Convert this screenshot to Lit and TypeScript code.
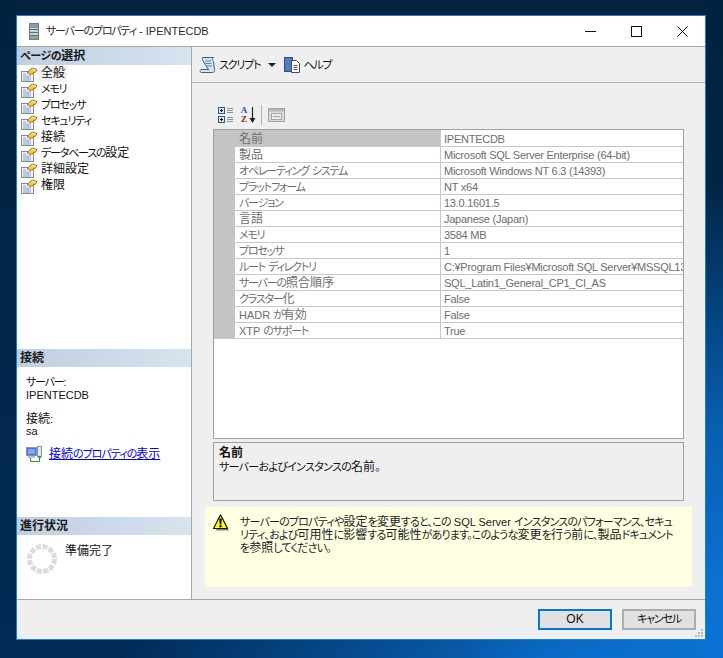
import { LitElement, html, css, svg } from "lit";
import { customElement } from "lit/decorators.js";

const PAGES = ["全般", "メモリ", "プロセッサ", "セキュリティ", "接続", "データベースの設定", "詳細設定", "権限"];

const ROWS = [
  ["名前", "IPENTECDB"],
  ["製品", "Microsoft SQL Server Enterprise (64-bit)"],
  ["オペレーティング システム", "Microsoft Windows NT 6.3 (14393)"],
  ["プラットフォーム", "NT x64"],
  ["バージョン", "13.0.1601.5"],
  ["言語", "Japanese (Japan)"],
  ["メモリ", "3584 MB"],
  ["プロセッサ", "1"],
  ["ルート ディレクトリ", "C:¥Program Files¥Microsoft SQL Server¥MSSQL13.MSSQLSERVER¥MSSQL"],
  ["サーバーの照合順序", "SQL_Latin1_General_CP1_CI_AS"],
  ["クラスター化", "False"],
  ["HADR が有効", "False"],
  ["XTP のサポート", "True"],
];

// the dialog font has narrow kana and small latin next to full width kanji
const jp = (s: string) =>
  s.split(/([ぁ-ヿ、。]+|[\x20-\x7e¥]+)/).map((part) => {
    if (!part) return "";
    if (/^[ぁ-ヿ、。]/.test(part)) return html`<span class="k">${part}</span>`;
    if (/^[\x20-\x7e¥]/.test(part)) return html`<span class="l">${part}</span>`;
    return part;
  });

const pageIcon = svg`<svg class="icon" width="17" height="15" viewBox="0 0 17 15">
  <rect x="0.500" y="4.500" width="12" height="10" fill="#f6f6f6" stroke="#8b8b8b"/>
  <path d="M2 7h3M2 9h8M2 11h8M2 13h8" stroke="#7d9cc4"/>
  <path d="M6 5.500L11 1l5 1.500-1.500 2.500-5 2.500z" fill="#f3c93e" stroke="#6e5a1c" stroke-width="0.800"/>
  <path d="M11 2l4 1.500" stroke="#fff2a8"/>
</svg>`;

const titleIcon = svg`<svg class="icon" width="10" height="17" viewBox="0 0 10 17">
  <rect x="0.500" y="0.500" width="9" height="16" fill="#c9d3da" stroke="#6f7c88"/>
  <rect x="1" y="1" width="8" height="4" fill="#8c9aa6"/>
  <path d="M1 6.500h8M1 9.500h8M1 12.500h8" stroke="#5d6c78"/>
  <rect x="1" y="13" width="8" height="3" fill="#86b26f"/>
</svg>`;

const scrollIcon = svg`<svg class="icon" width="18" height="18" viewBox="0 0 18 18">
  <path d="M3.500 1.500h11c-1.500 1-1.500 3 0 4l1 8c.5 2-.5 3-2 3H2.500c-1.500 0-2-2-.5-3h8l-1-.5L3.500 4c-.5-1 0-2.500 0-2.500z" fill="#d5e3f1" stroke="#3d6187"/>
  <path d="M6 5h6M6.500 7.500h6M7 10h6" stroke="#5a83ad"/>
</svg>`;

const helpIcon = svg`<svg class="icon" width="17" height="17" viewBox="0 0 17 17">
  <rect x="0.500" y="1.500" width="8" height="14" fill="#4f7fc0" stroke="#2c4f86"/>
  <path d="M7.500 4.500h5l3 3v9h-8z" fill="#fbfbfb" stroke="#4a4a4a"/>
  <path d="M9.500 9.500h4M9.500 11.500h4M9.500 13.500h4" stroke="#555"/>
</svg>`;

const categoryIcon = svg`<svg class="icon" width="16" height="16" viewBox="0 0 16 16">
  <rect x="0.500" y="0.500" width="6" height="6" fill="#dbe9f7" stroke="#33587f"/>
  <rect x="0.500" y="9.500" width="6" height="6" fill="#dbe9f7" stroke="#33587f"/>
  <path d="M2 3.500h3M3.500 2v3M2 12.500h3M3.500 11v3" stroke="#111"/>
  <path d="M9 1.500h6M9 3.500h6M9 5.500h6M9 10.500h6M9 12.500h6M9 14.500h6" stroke="#8b9299"/>
</svg>`;

const arrowIcon = svg`<svg class="icon" width="7" height="17" viewBox="0 0 7 17">
  <path d="M3.500 0v13" stroke="#222" stroke-width="1.200"/>
  <path d="M0.500 11h6l-3 5z" fill="#222"/>
</svg>`;

const pagesIcon = svg`<svg class="icon" width="17" height="14" viewBox="0 0 17 14">
  <rect x="0.500" y="0.500" width="16" height="13" fill="#dcdcdc" stroke="#a2a2a2"/>
  <rect x="1" y="1" width="15" height="2.500" fill="#b9b9b9"/>
  <rect x="3.500" y="5.500" width="10" height="6" fill="#ececec" stroke="#a8a8a8"/>
  <path d="M5 8.500h7" stroke="#a8a8a8"/>
</svg>`;

const connectIcon = svg`<svg class="icon" width="17" height="16" viewBox="0 0 17 16">
  <rect x="0.500" y="1.500" width="10" height="8" fill="#3f74d8" stroke="#8a94a3"/>
  <rect x="2" y="3" width="7" height="5" fill="#7fa8ee"/>
  <rect x="2" y="10" width="7" height="2" fill="#b8bec7"/>
  <rect x="11.500" y="0.500" width="4" height="10" fill="#e3e6ea" stroke="#8a94a3"/>
  <path d="M4.500 12v3.500h9V11" fill="none" stroke="#2f9a2f"/>
  <path d="M11.500 12l2-2.500 2 2.500z" fill="#2f9a2f"/>
</svg>`;

const warnIcon = svg`<svg class="icon" width="17" height="17" viewBox="0 0 17 17">
  <path d="M9.500 3.500l6.500 13h-13z" fill="#808080"/>
  <path d="M7.500 0.800l7 13.700H.5z" fill="#ffff00" stroke="#111" stroke-width="1.200" stroke-linejoin="round"/>
  <path d="M6.200 4.500h2.600l-.5 6h-1.600z" fill="#111"/>
  <circle cx="7.500" cy="12.300" r="1.200" fill="#111"/>
</svg>`;

const spinner = svg`<svg class="icon" width="30" height="30" viewBox="0 0 30 30">
  <circle cx="15" cy="15" r="12.500" fill="none" stroke="#dcdcdc" stroke-width="5" stroke-dasharray="5.200 1.345"/>
</svg>`;

@customElement("app-root")
export class AppRoot extends LitElement {
  static styles = css`
    :host {
      display: block;
      width: 723px;
      height: 658px;
      box-sizing: border-box;
      padding: 15px 0 0 16px;
      overflow: hidden;
      background:
        radial-gradient(ellipse 260px 420px at 100% 92%, #0a74d6 0%, rgba(10, 110, 205, 0.75) 45%, rgba(10, 100, 190, 0) 100%),
        radial-gradient(ellipse 500px 110px at 85% 100%, #0a6fce 0%, rgba(10, 100, 190, 0) 100%),
        linear-gradient(180deg, #02233f 0%, #012a55 100%);
      font: 12px/14px "Liberation Sans", "Noto Sans CJK JP", sans-serif;
      font-feature-settings: "palt";
      color: #111;
    }
    .k {
      font-size: 11px;
      letter-spacing: -1.2px;
    }
    .l {
      font-size: 11px;
    }
    .window {
      width: 690px;
      height: 625px;
      box-sizing: border-box;
      border: 1px solid #1480d8;
      display: flex;
      flex-direction: column;
      background: #efefef;
    }
    .titlebar {
      height: 30px;
      flex: none;
      background: #fff;
      display: flex;
      align-items: center;
      padding-left: 12px;
      border-bottom: 1px solid #a8a8a8;
    }
    .title {
      margin-left: 7px;
      color: #2a2a2a;
    }
    .controls {
      margin-left: auto;
      display: flex;
    }
    .controls span {
      width: 46px;
      height: 30px;
      display: flex;
      align-items: center;
      justify-content: center;
    }
    .main {
      flex: 1;
      display: flex;
      min-height: 0;
      border-bottom: 1px solid #a8a8a8;
    }
    .left {
      width: 174px;
      flex: none;
      background: #fff;
      border-right: 1px solid #a8a8a8;
      display: grid;
      grid-template-rows: 302px 168px 1fr;
    }
    .head {
      height: 18px;
      padding-left: 3px;
      font-weight: 700;
      line-height: 19px;
      color: #1a1a1a;
      background: linear-gradient(90deg, #bfcfdf, #d6e4f1);
    }
    .head .k {
      letter-spacing: -0.4px;
    }
    .pages {
      padding: 1px 0 0 4px;
      display: flex;
      flex-direction: column;
    }
    .page {
      height: 16px;
      display: flex;
      align-items: center;
    }
    .icon {
      flex: none;
    }
    .page span.lab {
      margin-left: 1px;
      padding: 0 2px;
      line-height: 15px;
      height: 16px;
    }
    .page.on span.lab {
      background: #f0f0f0;
    }
    .conn {
      padding: 9px 0 0 9px;
    }
    .conn p {
      margin: 0;
      line-height: 13px;
    }
    .conn p.gap {
      margin-top: 11px;
    }
    .conn p.sa {
      margin-top: -1px;
    }
    .link {
      display: flex;
      align-items: center;
      gap: 6px;
      margin-top: 8px;
    }
    .link a {
      color: #0000ee;
      text-decoration: underline;
    }
    .link .k {
      letter-spacing: -1px;
    }
    .status {
      display: flex;
      padding: 9px 0 0 10px;
    }
    .status span {
      margin-left: 8px;
    }
    .right {
      flex: 1;
      min-width: 0;
      display: flex;
      flex-direction: column;
    }
    .toolbar {
      height: 36px;
      flex: none;
      box-sizing: border-box;
      border-bottom: 1px solid #b0b0b0;
      display: flex;
      align-items: center;
      padding-left: 7px;
    }
    .toolbar .txt {
      margin-left: 2px;
    }
    .caret {
      width: 0;
      height: 0;
      margin: 0 8px;
      border-left: 4px solid transparent;
      border-right: 4px solid transparent;
      border-top: 4px solid #222;
    }
    .content {
      flex: 1;
      min-height: 0;
      padding: 23px 21px 0 21px;
      display: flex;
      flex-direction: column;
    }
    .gridbar {
      height: 18px;
      display: flex;
      align-items: center;
      padding-left: 5px;
      margin-bottom: 5px;
    }
    .az {
      width: 10px;
      margin-left: 5px;
      font: 700 9px/9px "Liberation Serif", serif;
      text-align: center;
    }
    .az b {
      display: block;
      color: #2a4fa8;
    }
    .az b + b {
      color: #a52020;
    }
    .sep {
      width: 1px;
      height: 20px;
      background: #b4b4b4;
      margin: 0 6px 0 5px;
    }
    .grid {
      height: 310px;
      flex: none;
      box-sizing: border-box;
      border: 1px solid #a0a0a0;
      background: #fff;
      overflow: hidden;
    }
    .row {
      height: 16px;
      box-sizing: border-box;
      display: flex;
      border-bottom: 1px solid #c8c8c8;
      color: #6d6d6d;
      line-height: 17px;
      white-space: nowrap;
    }
    .gutter {
      width: 21px;
      flex: none;
      background: #c4c4c4;
    }
    .name {
      width: 206px;
      flex: none;
      box-sizing: border-box;
      padding-left: 4px;
      border-right: 1px solid #c8c8c8;
    }
    .row.sel {
      height: 17px;
      line-height: 18px;
    }
    .row.sel .name {
      background: #c4c4c4;
    }
    .val {
      padding-left: 3px;
      font-size: 11px;
      letter-spacing: -0.25px;
    }
    .desc {
      height: 59px;
      flex: none;
      box-sizing: border-box;
      margin-top: 3px;
      border: 1px solid #a0a0a0;
      padding: 3px 5px;
      line-height: 14px;
    }
    .desc b {
      display: block;
    }
    .desc .k {
      letter-spacing: -0.7px;
    }
    .warn {
      height: 80px;
      flex: none;
      margin: 6px -8px 0 -8px;
      background: #ffffe1;
      display: flex;
      padding: 7px 0 0 8px;
      box-sizing: border-box;
    }
    .warn div {
      margin-left: 10px;
      padding-top: 2px;
      line-height: 13px;
      white-space: nowrap;
      color: #222;
    }
    .warn .k {
      letter-spacing: -0.8px;
    }
    .footer {
      height: 39px;
      flex: none;
      position: relative;
      display: flex;
      justify-content: flex-end;
      gap: 10px;
      padding: 9px 9px 0 0;
      box-sizing: border-box;
    }
    .btn {
      width: 74px;
      height: 21px;
      box-sizing: border-box;
      border: 2px solid #adadad;
      background: #e1e1e1;
      text-align: center;
      line-height: 17px;
      color: #111;
    }
    .btn.def {
      border-color: #0078d7;
    }
    .grip {
      position: absolute;
      right: 1px;
      bottom: 1px;
    }
  `;

  render() {
    return html`
      <div class="window">
        <div class="titlebar">
          ${titleIcon}
          <span class="title">${jp("サーバーのプロパティ - IPENTECDB")}</span>
          <div class="controls">
            <span><svg width="11" height="11" viewBox="0 0 11 11"><path d="M0 5.500h11" stroke="#111"/></svg></span>
            <span><svg width="11" height="11" viewBox="0 0 11 11"><rect x="0.500" y="0.500" width="10" height="10" fill="none" stroke="#111"/></svg></span>
            <span><svg width="11" height="11" viewBox="0 0 11 11"><path d="M0.500 0.500l10 10M10.500 0.500l-10 10" stroke="#111"/></svg></span>
          </div>
        </div>
        <div class="main">
          <div class="left">
            <div>
              <div class="head">${jp("ページの選択")}</div>
              <div class="pages">
                ${PAGES.map((p, i) => html`<div class="page ${i === 0 ? "on" : ""}">${pageIcon}<span class="lab">${jp(p)}</span></div>`)}
              </div>
            </div>
            <div>
              <div class="head">接続</div>
              <div class="conn">
                <p>${jp("サーバー:")}</p>
                <p>${jp("IPENTECDB")}</p>
                <p class="gap">${jp("接続:")}</p>
                <p class="sa">${jp("sa")}</p>
                <div class="link">${connectIcon}<a>${jp("接続のプロパティの表示")}</a></div>
              </div>
            </div>
            <div>
              <div class="head">進行状況</div>
              <div class="status">${spinner}<span>準備完了</span></div>
            </div>
          </div>
          <div class="right">
            <div class="toolbar">
              ${scrollIcon}<span class="txt">${jp("スクリプト")}</span>
              <i class="caret"></i>
              ${helpIcon}<span class="txt">${jp("ヘルプ")}</span>
            </div>
            <div class="content">
              <div class="gridbar">
                ${categoryIcon}
                <span class="az"><b>A</b><b>Z</b></span>
                ${arrowIcon}
                <i class="sep"></i>
                ${pagesIcon}
              </div>
              <div class="grid">
                ${ROWS.map(
                  (r, i) => html`<div class="row ${i === 0 ? "sel" : ""}">
                    <span class="gutter"></span>
                    <span class="name">${jp(r[0])}</span>
                    <span class="val">${r[1]}</span>
                  </div>`
                )}
              </div>
              <div class="desc"><b>名前</b>${jp("サーバーおよびインスタンスの名前。")}</div>
              <div class="warn">
                ${warnIcon}
                <div>
                  ${jp("サーバーのプロパティや設定を変更すると、この SQL Server インスタンスのパフォーマンス、セキュ")}<br />
                  ${jp("リティ、および可用性に影響する可能性があります。このような変更を行う前に、製品ドキュメント")}<br />
                  ${jp("を参照してください。")}
                </div>
              </div>
            </div>
          </div>
        </div>
        <div class="footer">
          <div class="btn def">OK</div>
          <div class="btn">${jp("キャンセル")}</div>
          <svg class="grip" width="10" height="10" viewBox="0 0 10 10">
            <path d="M7 1h2v2H7zM4 4h2v2H4zM7 4h2v2H7zM1 7h2v2H1zM4 7h2v2H4zM7 7h2v2H7z" fill="#b8b8b8"/>
          </svg>
        </div>
      </div>
    `;
  }
}
